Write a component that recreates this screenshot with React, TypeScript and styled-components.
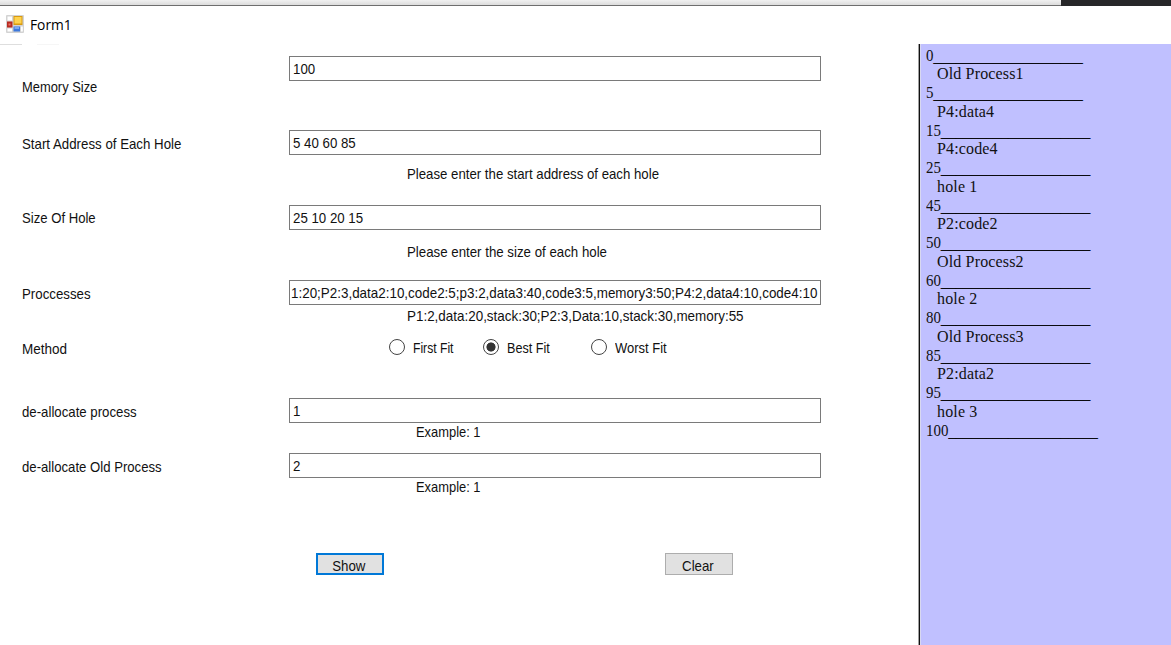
import React from 'react';
import styled, { createGlobalStyle } from 'styled-components';

const Global = createGlobalStyle`
  * { box-sizing: border-box; }
  html, body { margin: 0; padding: 0; background: #fff; overflow: hidden; }
`;

const Window = styled.div`
  width: 1171px;
  height: 645px;
  display: flex;
  flex-direction: column;
  background: #fff;
  color: #111;
  font: 15px/18px 'Liberation Sans', Arial, sans-serif;
  overflow: hidden;
`;

const Backdrop = styled.div`
  display: flex;
  flex: none;
  height: 6px;
  border-bottom: 1px solid #6e6e6e;
`;
const BackdropLight = styled.div`
  width: 1061px;
  background: linear-gradient(#f1f1f1, #dcdcdc);
`;
const BackdropDark = styled.div`
  flex: 1;
  height: 6px;
  background: #272729;
`;

const TitleBar = styled.div`
  display: flex;
  flex: none;
  height: 38px;
  padding: 9px 0 0 6px;
`;
const Title = styled.div`
  margin: -1px 0 0 6px;
  font: 15px/20px 'Open Sans', 'Noto Sans', sans-serif;
  color: #000;
  transform: scaleX(0.92);
  transform-origin: 0 0;
`;

const Body = styled.div`
  display: flex;
  flex: 1;
  min-height: 0;
`;

const Form = styled.div`
  width: 918px;
  flex: none;
`;
const TitleEdge = styled.div`
  display: flex;
  gap: 15px;
  height: 12px;
  &::before { content: ''; width: 22px; height: 1px; background: #dedede; }
  &::after { content: ''; width: 22px; height: 1px; background: #f6f6f6; }
`;

const Row = styled.div<{ $height: number }>`
  display: flex;
  height: ${p => p.$height}px;
  padding-left: 22px;
`;
const LabelCell = styled.div<{ $top: number }>`
  width: 266px;
  flex: none;
  padding: ${p => p.$top}px 0 0 0.4px;
`;
const FieldCell = styled.div`
  width: 534px;
`;
const Text = styled.span<{ $stretch?: number }>`
  display: block;
  width: max-content;
  white-space: pre;
  transform: scaleX(${p => p.$stretch ?? 0.885});
  transform-origin: 0 0;
`;
const Field = styled.div<{ $inset?: number }>`
  height: 25px;
  width: 532px;
  margin-left: 0.5px;
  border: 1px solid #7a7a7a;
  padding: 3px 0 0 ${p => p.$inset ?? 3}px;
  background: #fff;
  overflow: hidden;
`;
const Hint = styled.div<{ $top: number; $left: number }>`
  padding: ${p => p.$top}px 0 0 ${p => p.$left}px;
`;

const Options = styled.div`
  display: flex;
  padding: 9px 0 0 101px;
`;
const Option = styled.div<{ $width: number }>`
  display: flex;
  gap: 8px;
  width: ${p => p.$width}px;
`;
const Radio = styled.span<{ $checked?: boolean }>`
  width: 16px;
  height: 16px;
  flex: none;
  border: 1px solid #444;
  border-radius: 50%;
  background: ${p => (p.$checked ? 'radial-gradient(circle, #333 0 4.2px, #fff 4.9px)' : '#fff')};
`;

const Buttons = styled.div`
  display: flex;
  gap: 281px;
  padding: 45px 0 0 316px;
`;
const Button = styled.div<{ $primary?: boolean }>`
  display: flex;
  justify-content: center;
  width: 68px;
  height: 22px;
  padding-top: ${p => (p.$primary ? 2 : 3)}px;
  padding-right: 3px;
  border: ${p => (p.$primary ? '2px solid #0078d7' : '1px solid #adadad')};
  background: #e1e1e1;
  & > span { transform-origin: 50% 0; }
`;

const MemoryMap = styled.div`
  flex: 1;
  border-left: 1px solid #a0a0a0;
  box-shadow: inset 1px 0 0 #111, inset 2px 0 0 #d8d8f0;
  background: #c0c0ff;
  padding: 2.5px 0 0 7px;
  font: 16px/18.75px 'Liberation Serif', 'Times New Roman', serif;
  color: #111;
`;
const Address = styled.div`
  width: max-content;
  white-space: pre;
  transform: scaleX(0.933);
  transform-origin: 0 0;
`;
const Rule = styled.span`
  display: inline-block;
  color: #000;
  -webkit-text-stroke: 0.3px #000;
  transform: translateY(0.5px);
`;
const Segment = styled.div`
  padding-left: 11px;
  white-space: pre;
  letter-spacing: 0.15px;
`;

const FormIcon = () => (
  <svg width="18" height="18" viewBox="0 0 18 18">
    <rect width="18" height="18" rx="1" fill="#d3d3d3" />
    <rect x="1.5" y="1.5" width="4.5" height="4" fill="#fff" />
    <rect x="1" y="6.5" width="5.5" height="6" fill="#b92a20" />
    <rect x="2.5" y="8.5" width="2" height="2" fill="#e77468" />
    <rect x="7.5" y="1" width="9" height="9" fill="#d99a10" />
    <rect x="8.5" y="2" width="7" height="6.5" fill="#ffd34d" />
    <rect x="7.5" y="11.5" width="6.5" height="5" fill="#3d78dc" />
    <rect x="8.5" y="12" width="4.5" height="2" fill="#79a7f2" />
    <rect x="1.5" y="13.5" width="4.5" height="3" fill="#fff" />
    <rect x="15" y="11.5" width="1.8" height="5" fill="#fff" />
  </svg>
);

type Entry = {
  label: string;
  labelTop: number;
  stretch?: number;
  value: string;
  valueStretch?: number;
  inset?: number;
  height: number;
  hint?: string;
  hintTop?: number;
  hintLeft?: number;
  hintStretch?: number;
};

const setup: Entry[] = [
  { label: 'Memory Size', labelTop: 22, stretch: 0.86, value: '100', height: 74 },
  { label: 'Start Address of Each Hole', labelTop: 5, value: '5 40 60 85', height: 75, hint: 'Please enter the start address of each hole', hintTop: 10, hintLeft: 119, hintStretch: 0.881 },
  { label: 'Size Of Hole', labelTop: 4, stretch: 0.875, value: '25 10 20 15', height: 75, hint: 'Please enter the size of each hole', hintTop: 13, hintLeft: 119 },
  {
    label: 'Proccesses', labelTop: 5, stretch: 0.885,
    value: '1:20;P2:3,data2:10,code2:5;p3:2,data3:40,code3:5,memory3:50;P4:2,data4:10,code4:10',
    valueStretch: 0.894, inset: 1, height: 50,
    hint: 'P1:2,data:20,stack:30;P2:3,Data:10,stack:30,memory:55', hintTop: 2, hintLeft: 119, hintStretch: 0.895,
  },
];

const release: Entry[] = [
  { label: 'de-allocate process', labelTop: 5, stretch: 0.881, value: '1', height: 55, hint: 'Example: 1', hintTop: 0, hintLeft: 128, hintStretch: 0.86 },
  { label: 'de-allocate Old Process', labelTop: 5, stretch: 0.877, value: '2', height: 55, hint: 'Example: 1', hintTop: 0, hintLeft: 128, hintStretch: 0.86 },
];

const methods = [
  { name: 'First Fit', width: 94, stretch: 0.81, checked: false },
  { name: 'Best Fit', width: 108, stretch: 0.84, checked: true },
  { name: 'Worst Fit', width: 100, stretch: 0.865, checked: false },
];

const blocks: [string, string?][] = [
  ['0', 'Old Process1'],
  ['5', 'P4:data4'],
  ['15', 'P4:code4'],
  ['25', 'hole 1'],
  ['45', 'P2:code2'],
  ['50', 'Old Process2'],
  ['60', 'hole 2'],
  ['80', 'Old Process3'],
  ['85', 'P2:data2'],
  ['95', 'hole 3'],
  ['100'],
];

const EntryRow = ({ e }: { e: Entry }) => (
  <Row $height={e.height}>
    <LabelCell $top={e.labelTop}><Text $stretch={e.stretch}>{e.label}</Text></LabelCell>
    <FieldCell>
      <Field $inset={e.inset}><Text $stretch={e.valueStretch}>{e.value}</Text></Field>
      {e.hint && (
        <Hint $top={e.hintTop ?? 0} $left={e.hintLeft ?? 0}><Text $stretch={e.hintStretch}>{e.hint}</Text></Hint>
      )}
    </FieldCell>
  </Row>
);

export default function App() {
  return (
    <>
      <Global />
      <Window>
        <Backdrop><BackdropLight /><BackdropDark /></Backdrop>
        <TitleBar><FormIcon /><Title>Form1</Title></TitleBar>
        <Body>
          <Form>
            <TitleEdge />
            {setup.map(e => <EntryRow key={e.label} e={e} />)}
            <Row $height={68}>
              <LabelCell $top={10}><Text $stretch={0.9}>Method</Text></LabelCell>
              <Options>
                {methods.map(m => (
                  <Option key={m.name} $width={m.width}>
                    <Radio $checked={m.checked} /><Text $stretch={m.stretch}>{m.name}</Text>
                  </Option>
                ))}
              </Options>
            </Row>
            {release.map(e => <EntryRow key={e.label} e={e} />)}
            <Buttons>
              <Button $primary><Text>Show</Text></Button>
              <Button><Text>Clear</Text></Button>
            </Buttons>
          </Form>
          <MemoryMap>
            {blocks.map(([address, name]) => (
              <React.Fragment key={address}>
                <Address>{address}<Rule>{'_'.repeat(20)}</Rule></Address>
                {name && <Segment>{name}</Segment>}
              </React.Fragment>
            ))}
          </MemoryMap>
        </Body>
      </Window>
    </>
  );
}
